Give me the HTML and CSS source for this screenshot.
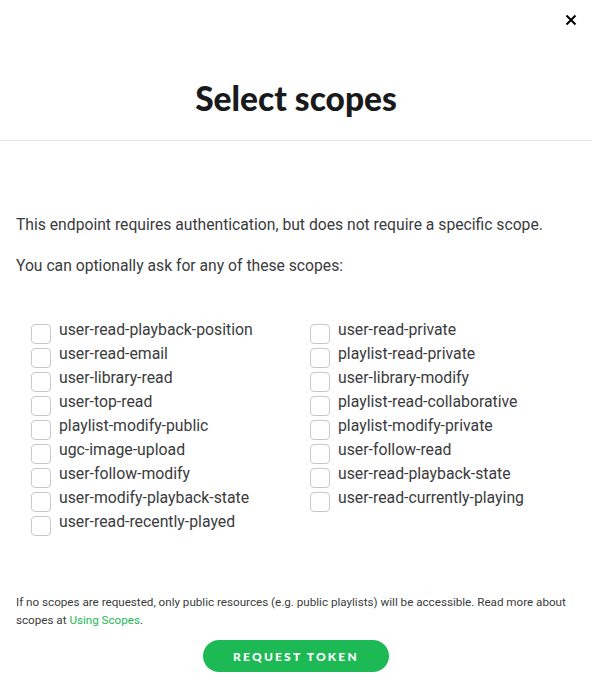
FILE: index.html
```html
<!DOCTYPE html>
<html>
<head>
<meta charset="utf-8">
<link rel="stylesheet" href="styles.css">
</head>
<body>
<div class="modal">
  <header class="head">
    <button class="close" aria-label="Close">
      <svg width="12" height="12" viewBox="0 0 12 12"><path d="M1.5 1.5 L10.5 10.5 M10.5 1.5 L1.5 10.5" stroke="#000" stroke-width="2" fill="none"/></svg>
    </button>
    <h1 class="title">Select scopes</h1>
  </header>
  <main class="body">
    <p class="lead">This endpoint requires authentication, but does not require a specific scope.</p>
    <p class="lead second">You can optionally ask for any of these scopes:</p>
    <div class="scopes">
      <div class="col">
        <label class="scope"><span class="box"></span>user-read-playback-position</label>
        <label class="scope"><span class="box"></span>user-read-email</label>
        <label class="scope"><span class="box"></span>user-library-read</label>
        <label class="scope"><span class="box"></span>user-top-read</label>
        <label class="scope"><span class="box"></span>playlist-modify-public</label>
        <label class="scope"><span class="box"></span>ugc-image-upload</label>
        <label class="scope"><span class="box"></span>user-follow-modify</label>
        <label class="scope"><span class="box"></span>user-modify-playback-state</label>
        <label class="scope"><span class="box"></span>user-read-recently-played</label>
      </div>
      <div class="col">
        <label class="scope"><span class="box"></span>user-read-private</label>
        <label class="scope"><span class="box"></span>playlist-read-private</label>
        <label class="scope"><span class="box"></span>user-library-modify</label>
        <label class="scope"><span class="box"></span>playlist-read-collaborative</label>
        <label class="scope"><span class="box"></span>playlist-modify-private</label>
        <label class="scope"><span class="box"></span>user-follow-read</label>
        <label class="scope"><span class="box"></span>user-read-playback-state</label>
        <label class="scope"><span class="box"></span>user-read-currently-playing</label>
      </div>
    </div>
  </main>
  <footer class="foot">
    <p class="note">If no scopes are requested, only public resources (e.g. public playlists) will be accessible. Read more about scopes at <a href="#">Using Scopes</a>.</p>
    <div class="actions"><button class="btn">REQUEST TOKEN</button></div>
  </footer>
</div>
</body>
</html>
```
FILE: styles.css
```css
* { box-sizing: border-box; }
html, body { margin: 0; padding: 0; background: #fff; }
body { font-family: Roboto, "Liberation Sans", sans-serif; color: #222326; width: 592px; height: 688px; overflow: hidden; }
.modal { display: flex; flex-direction: column; }
.head { position: relative; height: 141px; border-bottom: 1px solid #e5e5e5; display: flex; justify-content: center; padding-top: 78px; }
.close { position: absolute; top: 14px; right: 15px; border: 0; background: none; padding: 0; width: 12px; height: 12px; cursor: pointer; display: block; }
.close svg { display: block; }
.title { margin: 0; font-family: Lato, "Liberation Sans", sans-serif; font-weight: 900; font-size: 33.5px; line-height: 40px; letter-spacing: 0; color: #191a1c; height: 40px; }
.body { padding: 72px 16px 0 16px; }
.lead { margin: 0; font-size: 15.7px; line-height: 24px; color: #3a3b3d; }
.second { margin-top: 17px; }
.scopes { display: grid; grid-template-columns: 279px 279px; padding: 40px 0 0 15px; }
.col { display: flex; flex-direction: column; }
.scope { display: flex; align-items: flex-start; height: 24px; font-size: 15.8px; line-height: 24px; color: #3a3b3d; white-space: nowrap; }
.box { width: 20px; height: 20px; border: 1px solid #c8c8c8; border-radius: 4px; margin: 6px 8px 0 0; flex: none; }
.foot { padding: 59px 16px 0 16px; }
.note { margin: 0; font-size: 11.65px; line-height: 18px; color: #3a3b3d; }
.note a { color: #1db954; text-decoration: none; }
.actions { display: flex; justify-content: center; padding: 11px 0 0 0; }
.btn { width: 186px; height: 32px; border: 0; border-radius: 16px; background: #1db954; color: #fff; font-family: Lato, "Liberation Sans", sans-serif; font-weight: 900; font-size: 12px; letter-spacing: 2.2px; padding: 0; }
```
